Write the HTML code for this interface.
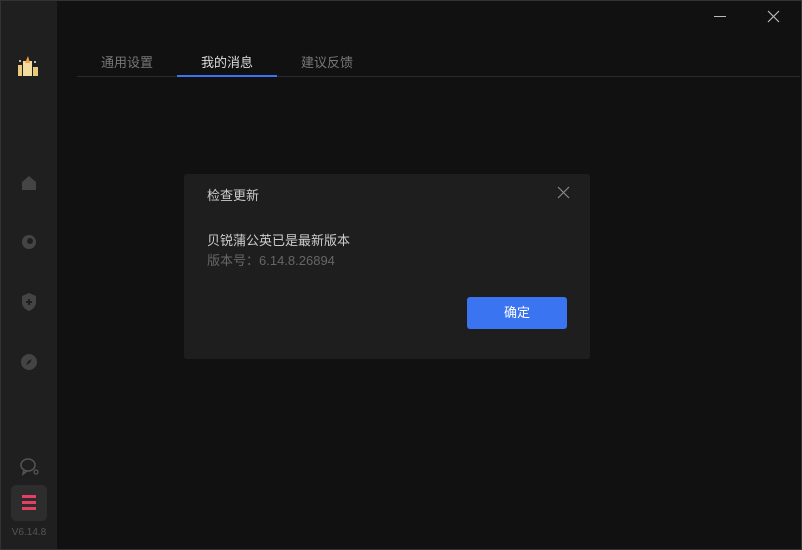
<!DOCTYPE html>
<html><head><meta charset="utf-8"><style>
*{margin:0;padding:0;box-sizing:border-box}
body{width:802px;height:550px;background:#111;overflow:hidden;position:relative;font-family:"Liberation Sans","Noto Sans CJK SC",sans-serif}
.frame{position:absolute;inset:0;border:1px solid #333;pointer-events:none}
.side{position:absolute;left:1px;top:1px;width:56px;height:548px;background:#1f1f1f}
.tab{position:absolute;top:52px;font-size:13px;color:#777}
.dlg{position:absolute;left:184px;top:174px;width:406px;height:185px;background:#1e1e1e;border-radius:3px}
.ic{position:absolute}
</style></head><body>
<div class="side"></div>
<!-- logo -->
<svg class="ic" style="left:17px;top:55px" width="24" height="24" viewBox="0 0 24 24">
<rect x="1" y="10" width="4" height="11" fill="#e9c97a"/>
<rect x="6" y="6" width="9" height="15" fill="#f3dca0"/>
<path d="M8 8 L11 1 L13 8 Z" fill="#f0a040"/>
<rect x="16" y="12" width="5" height="9" fill="#e9c97a"/>
<circle cx="3" cy="6" r="1" fill="#eee"/><circle cx="18" cy="7" r="1" fill="#eee"/>
</svg>
<!-- home -->
<svg class="ic" style="left:20px;top:174px" width="18" height="18" viewBox="0 0 18 18"><path d="M9 2 L16 8 V16 H2 V8 Z" fill="#444"/></svg>
<svg class="ic" style="left:20px;top:233px" width="18" height="18" viewBox="0 0 18 18"><circle cx="9" cy="9" r="7" fill="#444"/><circle cx="10" cy="8" r="3" fill="#1f1f1f"/></svg>
<svg class="ic" style="left:20px;top:292px" width="18" height="20" viewBox="0 0 18 20"><path d="M9 1 L16 4 V10 Q16 16 9 19 Q2 16 2 10 V4 Z" fill="#444"/><path d="M9 7 V13 M6 10 H12" stroke="#1f1f1f" stroke-width="2"/></svg>
<svg class="ic" style="left:20px;top:353px" width="18" height="18" viewBox="0 0 18 18"><circle cx="9" cy="9" r="8" fill="#444"/><path d="M12 6 L10 10 L6 12 L8 8 Z" fill="#1f1f1f"/></svg>
<svg class="ic" style="left:19px;top:457px" width="22" height="20" viewBox="0 0 22 20"><ellipse cx="9" cy="8" rx="7" ry="6" fill="none" stroke="#555" stroke-width="1.5"/><path d="M5 13 L4 17 L8 14" fill="none" stroke="#555" stroke-width="1.5"/><circle cx="17" cy="15" r="2" fill="none" stroke="#555" stroke-width="1.3"/></svg>
<div style="position:absolute;left:11px;top:485px;width:36px;height:36px;background:#2d2d2d;border-radius:5px"></div>
<div style="position:absolute;left:22px;top:495px;width:14px;height:3px;background:#e43f64"></div>
<div style="position:absolute;left:22px;top:501px;width:14px;height:3px;background:#e43f64"></div>
<div style="position:absolute;left:22px;top:507px;width:14px;height:3px;background:#e43f64"></div>
<div style="position:absolute;left:0;width:58px;top:527px;text-align:center;font-size:10px;color:#555">V6.14.8</div>
<!-- window controls -->
<div style="position:absolute;left:714px;top:16px;width:12px;height:1px;background:#bbb"></div>
<svg class="ic" style="left:767px;top:10px" width="13" height="13" viewBox="0 0 13 13"><path d="M1 1 L12 12 M12 1 L1 12" stroke="#bbb" stroke-width="1.2"/></svg>
<!-- tabs -->
<div style="position:absolute;left:77px;top:76px;width:723px;height:1px;background:#2a2a2a"></div>
<div style="position:absolute;left:177px;top:75px;width:100px;height:2px;background:#3a74f0"></div>
<div class="tab" style="left:101px">通用设置</div>
<div class="tab" style="left:201px;color:#ddd">我的消息</div>
<div class="tab" style="left:301px">建议反馈</div>
<!-- dialog -->
<div class="dlg">
<div style="position:absolute;left:23px;top:11px;font-size:13px;color:#ccc">检查更新</div>
<svg class="ic" style="left:373px;top:12px" width="13" height="13" viewBox="0 0 13 13"><path d="M1 1 L12 12 M12 1 L1 12" stroke="#888" stroke-width="1.2"/></svg>
<div style="position:absolute;left:23px;top:56px;font-size:13px;color:#ccc">贝锐蒲公英已是最新版本</div>
<div style="position:absolute;left:23px;top:76px;font-size:13px;color:#666">版本号：6.14.8.26894</div>
<div style="position:absolute;left:283px;top:123px;width:100px;height:32px;background:#3b74f0;border-radius:3px;color:#fff;font-size:13px;text-align:center;line-height:32px">确定</div>
</div>
<div class="frame"></div>
</body></html>
